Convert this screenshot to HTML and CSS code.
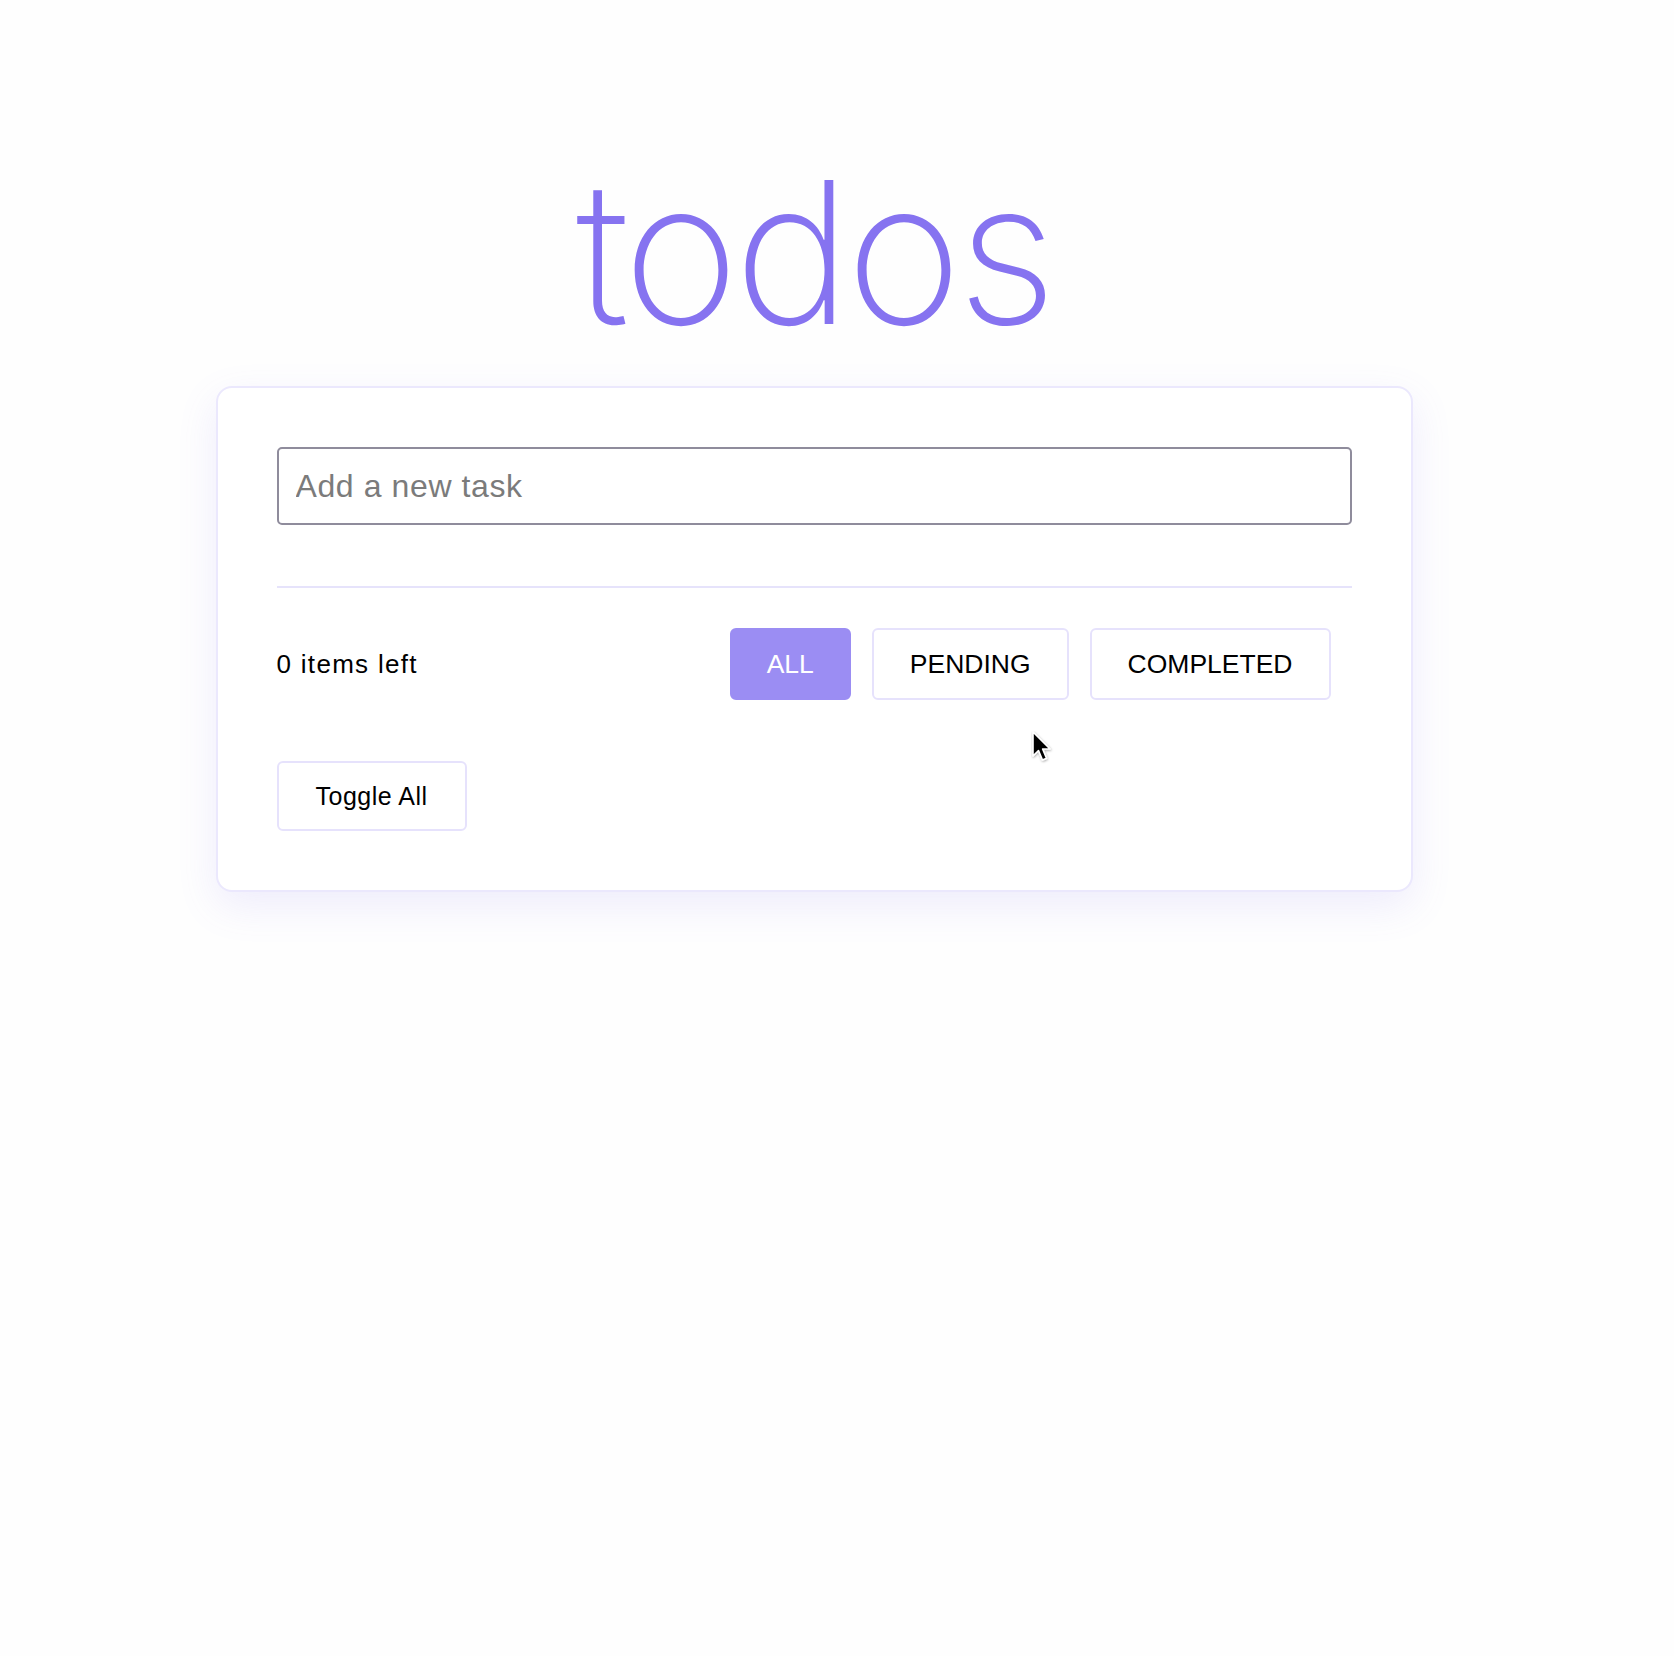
FILE: index.html
```html
<!DOCTYPE html>
<html lang="en">
<head>
<meta charset="utf-8">
<title>todos</title>
<link rel="stylesheet" href="styles.css">
</head>
<body>
<div class="page">
  <main class="app">
    <h1 class="title">todos</h1>
    <section class="card">
      <input class="new-task" type="text" placeholder="Add a new task">
      <div class="footer">
        <span class="count">0 items left</span>
        <div class="filters">
          <button class="btn filter active">ALL</button>
          <button class="btn filter">PENDING</button>
          <button class="btn filter">COMPLETED</button>
        </div>
      </div>
      <div class="actions">
        <button class="btn toggle">Toggle All</button>
      </div>
    </section>
  </main>
</div>
<svg class="cursor" width="24" height="34" viewBox="0 0 24 34" aria-hidden="true">
  <defs>
    <filter id="cs" x="-30%" y="-30%" width="160%" height="160%">
      <feDropShadow dx="0.5" dy="1" stdDeviation="0.8" flood-opacity="0.35"/>
    </filter>
  </defs>
  <path d="M2 1 L2 25 L7.5 19.5 L11.5 29 L15.5 27.3 L11.6 18 L19 18 Z" fill="#000" stroke="#fff" stroke-width="1.6" stroke-linejoin="round" filter="url(#cs)"/>
</svg>
</body>
</html>
```

FILE: styles.css
```css
html, body {
  margin: 0;
  padding: 0;
  background: #fefefe;
}
body {
  font-family: "Liberation Sans", Arial, sans-serif;
  color: #000;
  min-height: 1656px;
}
.page {
  width: 1628px;
}
.app {
  width: 1197px;
  margin: 0 auto;
}
.title {
  margin: 153px 0 35px;
  font-family: "Inter", "Liberation Sans", sans-serif;
  font-size: 198px;
  line-height: 1;
  font-weight: 200;
  text-align: center;
  color: #8673f0;
  letter-spacing: -5px;
}
.card {
  box-sizing: border-box;
  background: #fff;
  border: 2px solid #ebe8fd;
  border-radius: 16px;
  padding: 59px 59px 59px;
  box-shadow: 0 14px 40px rgba(125, 105, 240, 0.12);
}
.new-task {
  display: block;
  box-sizing: border-box;
  width: 100%;
  height: 78px;
  margin: 0 0 61px;
  padding: 0 17px;
  border: 2px solid #8f8c9c;
  border-radius: 5px;
  font-family: "Liberation Sans", Arial, sans-serif;
  font-size: 32px;
  letter-spacing: 0.6px;
  color: #000;
  background: #fff;
  outline: none;
}
.new-task::placeholder {
  color: #7b7b7b;
}
.footer {
  display: flex;
  align-items: center;
  justify-content: space-between;
  border-top: 2px solid #e6e3fb;
  padding-top: 40px;
}
.count {
  font-size: 26px;
  letter-spacing: 1.3px;
}
.filters {
  display: flex;
  gap: 21px;
  margin-right: 21px;
}
.btn {
  box-sizing: border-box;
  height: 72px;
  padding: 0 36px;
  border: 2px solid #e6e2fc;
  border-radius: 6px;
  background: #fff;
  color: #000;
  font-family: "Liberation Sans", Arial, sans-serif;
  font-size: 26.5px;
  cursor: pointer;
}
.filter.active {
  padding: 0 35px;
  background: #9b8df3;
  border-color: #9b8df3;
  color: #fff;
}
.actions {
  margin-top: 61px;
  display: flex;
}
.toggle {
  height: 70px;
  font-size: 25px;
  letter-spacing: 0.5px;
  padding: 0 37px;
}
.cursor {
  position: absolute;
  left: 1031px;
  top: 731px;
}
```
